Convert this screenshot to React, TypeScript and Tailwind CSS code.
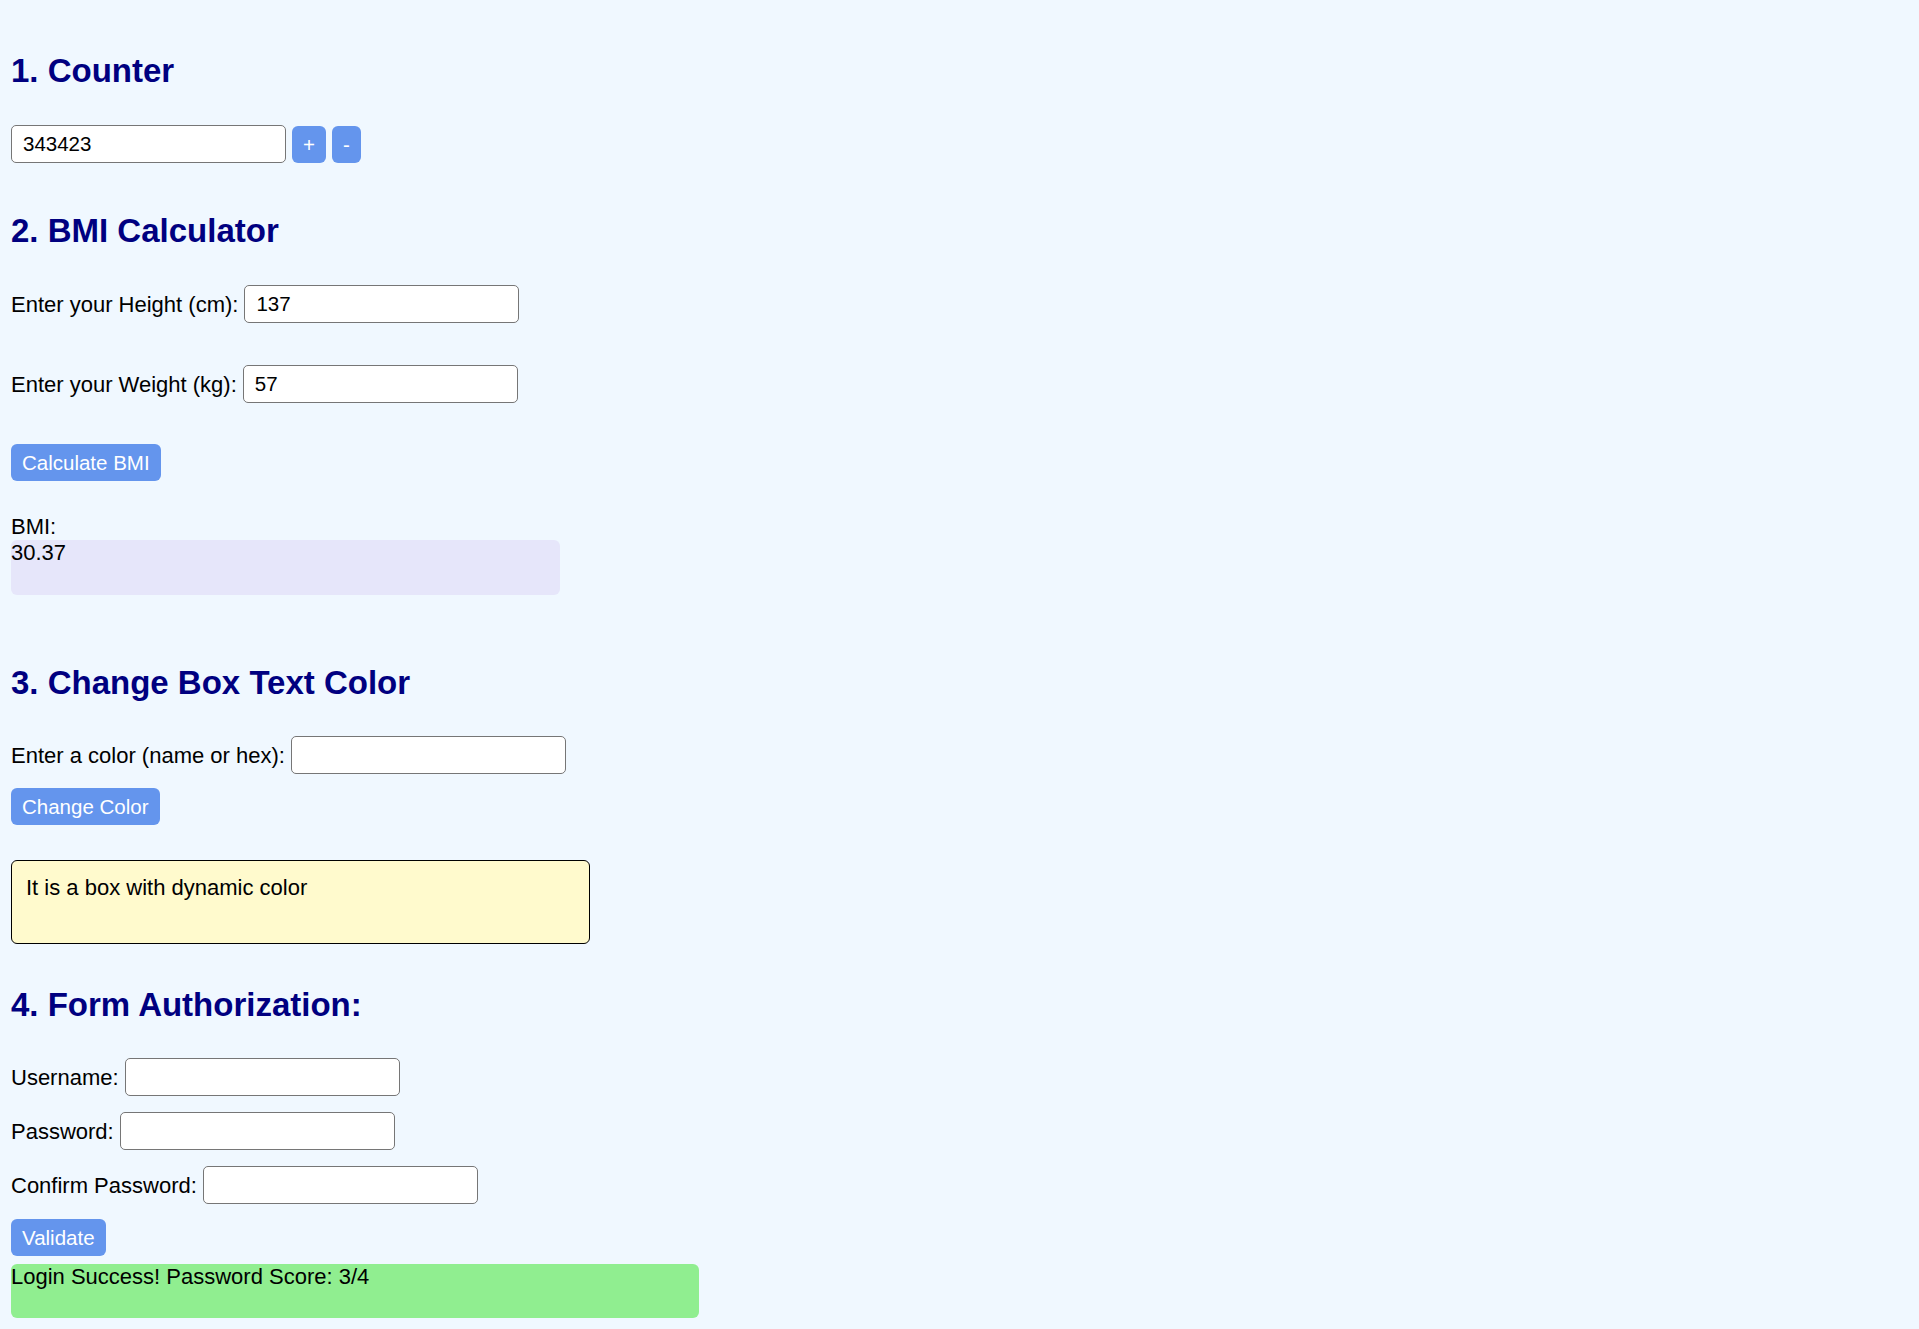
import { useState } from 'react';

const inputCls =
  'w-[275px] h-[38px] px-[11px] bg-white border border-[#767676] rounded-[5px] text-[20.5px] text-black outline-none';
const btnCls =
  'h-[37px] px-[11px] bg-[#6495ed] text-white text-[20.5px] leading-[23px] rounded-[6px] border-0 cursor-pointer';
const headCls = 'text-[33px] leading-[38px] font-bold text-[#000080]';

export default function App() {
  const [count, setCount] = useState(343423);
  const [height, setHeight] = useState('137');
  const [weight, setWeight] = useState('57');
  const [bmi, setBmi] = useState('30.37');
  const [color, setColor] = useState('');
  const [boxColor, setBoxColor] = useState('black');
  const [user, setUser] = useState('');
  const [pass, setPass] = useState('');
  const [confirm, setConfirm] = useState('');
  const [status, setStatus] = useState('Login Success! Password Score: 3/4');

  const calcBmi = () => {
    const h = Number(height) / 100;
    const w = Number(weight);
    if (h > 0 && w > 0) setBmi((w / (h * h)).toFixed(2));
  };

  const validate = () => {
    if (!user || !pass || pass !== confirm) {
      setStatus('Login Failed!');
      return;
    }
    let score = 0;
    if (pass.length >= 8) score++;
    if (/[A-Z]/.test(pass)) score++;
    if (/[0-9]/.test(pass)) score++;
    if (/[^A-Za-z0-9]/.test(pass)) score++;
    setStatus(`Login Success! Password Score: ${score}/4`);
  };

  return (
    <div className="min-h-screen bg-[#f0f8ff] px-[11px] pb-[20px] pt-[52px] text-[22px] leading-[25px] text-black [font-family:'Liberation_Sans',Arial,sans-serif]">
      {/* 1. Counter */}
      <h2 className={headCls}>1. Counter</h2>
      <div className="mt-[35px] flex items-center gap-[6px]">
        <input className={inputCls} value={count} onChange={(e) => setCount(Number(e.target.value) || 0)} />
        <button className={btnCls} onClick={() => setCount(count + 1)}>+</button>
        <button className={btnCls} onClick={() => setCount(count - 1)}>-</button>
      </div>

      {/* 2. BMI */}
      <h2 className={`${headCls} mt-[49px]`}>2. BMI Calculator</h2>
      <div className="mt-[35px] flex items-center gap-[6px]">
        <label>Enter your Height (cm):</label>
        <input className={inputCls} value={height} onChange={(e) => setHeight(e.target.value)} />
      </div>
      <div className="mt-[42px] flex items-center gap-[6px]">
        <label>Enter your Weight (kg):</label>
        <input className={inputCls} value={weight} onChange={(e) => setWeight(e.target.value)} />
      </div>
      <button className={`${btnCls} mt-[41px] block`} onClick={calcBmi}>Calculate BMI</button>
      <div className="mt-[33px]">BMI:</div>
      <div className="mt-[1px] w-[549px] h-[55px] bg-[#e6e6fa] rounded-[6px]">{bmi}</div>

      {/* 3. Color box */}
      <h2 className={`${headCls} mt-[69px]`}>3. Change Box Text Color</h2>
      <div className="mt-[34px] flex items-center gap-[6px]">
        <label>Enter a color (name or hex):</label>
        <input className={inputCls} value={color} onChange={(e) => setColor(e.target.value)} />
      </div>
      <button className={`${btnCls} mt-[14px] block`} onClick={() => setBoxColor(color || 'black')}>
        Change Color
      </button>
      <div
        className="mt-[35px] w-[579px] h-[84px] p-[14px] border border-black rounded-[6px] bg-[#fffacd]"
        style={{ color: boxColor }}
      >
        It is a box with dynamic color
      </div>

      {/* 4. Form */}
      <h2 className={`${headCls} mt-[42px]`}>4. Form Authorization:</h2>
      <div className="mt-[34px] flex items-center gap-[6px]">
        <label>Username:</label>
        <input className={inputCls} value={user} onChange={(e) => setUser(e.target.value)} />
      </div>
      <div className="mt-[16px] flex items-center gap-[6px]">
        <label>Password:</label>
        <input type="password" className={inputCls} value={pass} onChange={(e) => setPass(e.target.value)} />
      </div>
      <div className="mt-[16px] flex items-center gap-[6px]">
        <label>Confirm Password:</label>
        <input type="password" className={inputCls} value={confirm} onChange={(e) => setConfirm(e.target.value)} />
      </div>
      <button className={`${btnCls} mt-[15px] block`} onClick={validate}>Validate</button>
      <div className="mt-[8px] w-[688px] h-[54px] bg-[#90ee90] rounded-[6px]">{status}</div>
    </div>
  );
}
